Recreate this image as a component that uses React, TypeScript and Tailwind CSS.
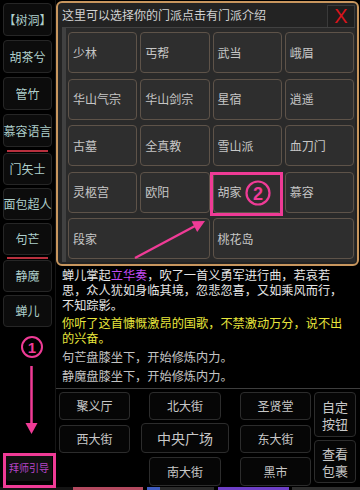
const PINK = "#ef3b96";

const LEFT_TOP = ["【树洞】", "胡茶兮", "管竹", "慕容语言"];
const LEFT_MID = ["门矢士", "面包超人", "句芒"];
const LEFT_LOW = ["静魔", "蝉儿"];

const SECTS = [
  "少林", "丐帮", "武当", "峨眉",
  "华山气宗", "华山剑宗", "星宿", "逍遥",
  "古墓", "全真教", "雪山派", "血刀门",
  "灵柩宫", "欧阳", "胡家", "慕容",
];

function SideButton({ label, h }: { label: string; h: string }) {
  return (
    <div
      className={`${h} flex items-center justify-center rounded-[4px] border border-[#262626] bg-[#0c0c0c] text-[12px] text-[#aecfcb] whitespace-nowrap`}
    >
      {label}
    </div>
  );
}

function SectCell({ label, wide }: { label: string; wide?: boolean }) {
  return (
    <div
      className={`${wide ? "col-span-2" : ""} h-[41px] flex items-center pl-[4px] rounded-[4px] border border-[#5e5349] bg-[#2e2e2e] text-[12px] text-[#c6c6c6] whitespace-nowrap`}
    >
      {label}
    </div>
  );
}

function NavButton({ children, cls }: { children: React.ReactNode; cls: string }) {
  return (
    <div
      className={`${cls} flex items-center justify-center rounded-[4px] border border-[#2c2c2c] bg-[#060606] text-[#c8c8c8] whitespace-nowrap`}
    >
      {children}
    </div>
  );
}

export default function App() {
  return (
    <div className="relative w-[360px] h-[490px] bg-black overflow-hidden flex flex-col font-['Noto_Sans_CJK_SC','Noto_Sans',sans-serif]">
      <div className="flex flex-row h-[487px]">
        {/* left name column */}
        <div className="w-[55px] shrink-0 flex flex-col px-[3px] pt-[3px]">
          <div className="flex flex-col gap-[4px]">
            {LEFT_TOP.map((n) => (
              <SideButton key={n} label={n} h="h-[33px]" />
            ))}
          </div>
          <div className="mt-[3px] mx-[4px] h-[2px] bg-[#b8303e]" />
          <div className="mt-[1px] flex flex-col gap-[3px]">
            {LEFT_MID.map((n) => (
              <SideButton key={n} label={n} h="h-[32px]" />
            ))}
          </div>
          <div className="mt-[2px] mx-[4px] h-[2px] bg-[#b8303e]" />
          <div className="mt-[1px] flex flex-col gap-[3px]">
            {LEFT_LOW.map((n) => (
              <SideButton key={n} label={n} h="h-[32px]" />
            ))}
          </div>
          <div className="mt-auto mb-[6px] ml-[3px] mr-0 h-[27px] flex items-center justify-center rounded-[3px] bg-[#101010] text-[10px] text-[#b845c8] whitespace-nowrap">
            拜师引导
          </div>
        </div>

        {/* main column */}
        <div className="flex-1 flex flex-col border-l border-[#161616]">
          <div className="h-[388px] flex flex-col justify-end pl-[6px] pb-[4px] overflow-hidden text-[12.2px] leading-[15px] whitespace-nowrap">
            <div className="text-[#e6e6e6]">
              <div>
                蝉儿掌起<span className="text-[#c24cf2]">立华奏</span>，吹了一首义勇军进行曲，若哀若
              </div>
              <div>思，众人犹如身临其境，忽悲忽喜，又如乘风而行，</div>
              <div>不知踪影。</div>
            </div>
            <div className="mt-[3px] text-[#e8e63c]">
              <div>你听了这首慷慨激昂的国歌，不禁激动万分，说不出</div>
              <div>的兴奋。</div>
            </div>
            <div className="mt-[4px] text-[#c4c4c4]">句芒盘膝坐下，开始修炼内力。</div>
            <div className="mt-[4px] text-[#c4c4c4]">静魔盘膝坐下，开始修炼内力。</div>
          </div>
          <div className="h-px bg-[#3e3e3e]" />

          {/* navigation */}
          <div className="flex-1 flex flex-row pl-[3px] text-[12px]">
            <div className="w-[71px] flex flex-col">
              <NavButton cls="mt-[3px] h-[28px]">聚义厅</NavButton>
              <NavButton cls="mt-[5px] h-[28px]">西大街</NavButton>
            </div>
            <div className="ml-[19px] w-[72px] flex flex-col">
              <NavButton cls="mt-[3px] h-[28px]">北大街</NavButton>
              <NavButton cls="mt-[3px] h-[30px] -mx-[8px] text-[14px]">中央广场</NavButton>
              <NavButton cls="mt-[4px] h-[29px]">南大街</NavButton>
            </div>
            <div className="ml-[19px] w-[71px] flex flex-col">
              <NavButton cls="mt-[3px] h-[28px]">圣贤堂</NavButton>
              <NavButton cls="mt-[5px] h-[28px]">东大街</NavButton>
              <NavButton cls="mt-[4px] h-[29px]">黑市</NavButton>
            </div>
            <div className="ml-[3px] w-[42px] flex flex-col text-[13px] leading-[17px]">
              <NavButton cls="mt-[3px] h-[45px] flex-col">
                <span>自定</span>
                <span>按钮</span>
              </NavButton>
              <NavButton cls="mt-[3px] h-[43px] flex-col">
                <span>查看</span>
                <span>包裹</span>
              </NavButton>
            </div>
          </div>
        </div>
      </div>

      {/* next row peeking at the bottom */}
      <div className="flex flex-row h-[3px]">
        <div className="w-[73px] bg-[#141414]" />
        <div className="w-[70px] bg-[#b3495f]" />
        <div className="w-[4px]" />
        <div className="w-[13px] bg-[#3f5cc0]" />
        <div className="w-[54px] bg-[#2a2a2a]" />
        <div className="w-[4px]" />
        <div className="w-[71px] bg-[#6d3fc6]" />
        <div className="w-[3px]" />
        <div className="flex-1 bg-[#2e2e2e]" />
      </div>

      {/* sect selection dialog */}
      <div className="absolute left-[56px] top-[1px] w-[303px] h-[265px] flex flex-col rounded-[6px] border-2 border-[#c8965e] bg-[#232323]">
        <div className="h-[24px] shrink-0 flex flex-row items-center justify-between pl-[4px] pr-[2px]">
          <span className="text-[12px] text-[#d2d2d2] whitespace-nowrap">这里可以选择你的门派点击有门派介绍</span>
          <div className="mt-[2px] w-[28px] h-[23px] flex items-center justify-center border border-[#3a3a3a] bg-[#1e1e1e] text-[20px] leading-none text-[#d8141c] font-['Liberation_Sans',sans-serif]">
            X
          </div>
        </div>
        <div className="flex-1 ml-[4px] mr-[2px] mb-[2px] border-l-[4px] border-t border-[#414141] bg-[#2a2a2a] pl-[2px] pr-[1px] pt-[4px]">
          <div className="grid grid-cols-4 gap-x-[3px] gap-y-[5.5px]">
            {SECTS.map((s) => (
              <SectCell key={s} label={s} />
            ))}
            <SectCell label="段家" wide />
            <SectCell label="桃花岛" wide />
          </div>
        </div>
      </div>

      {/* tutorial annotations */}
      <svg
        className="absolute left-0 top-0 pointer-events-none"
        width="360"
        height="490"
        viewBox="0 0 360 490"
      >
        {/* step 1 */}
        <circle cx="32" cy="347" r="10" fill="none" stroke={PINK} strokeWidth="2" />
        <text x="32" y="352.5" textAnchor="middle" fontSize="15" fontWeight="700" fill={PINK} fontFamily="Liberation Sans, sans-serif">
          1
        </text>
        <line x1="31.5" y1="366" x2="31.5" y2="424" stroke={PINK} strokeWidth="2.5" />
        <polygon points="25.5,423 37.5,423 31.5,434" fill={PINK} />
        <rect x="4.5" y="454.5" width="50" height="32" fill="none" stroke={PINK} strokeWidth="3" />

        {/* step 2 */}
        <rect x="211.5" y="173.5" width="70" height="41" fill="none" stroke={PINK} strokeWidth="3" />
        <circle cx="258" cy="193" r="11.5" fill="none" stroke={PINK} strokeWidth="2.2" />
        <text x="258" y="199.5" textAnchor="middle" fontSize="18" fontWeight="700" fill={PINK} fontFamily="Liberation Sans, sans-serif">
          2
        </text>
        <line x1="135" y1="258" x2="195" y2="226" stroke={PINK} strokeWidth="2.5" />
        <polygon points="205,221 197.2,231.9 191.6,221.3" fill={PINK} />
      </svg>
    </div>
  );
}
